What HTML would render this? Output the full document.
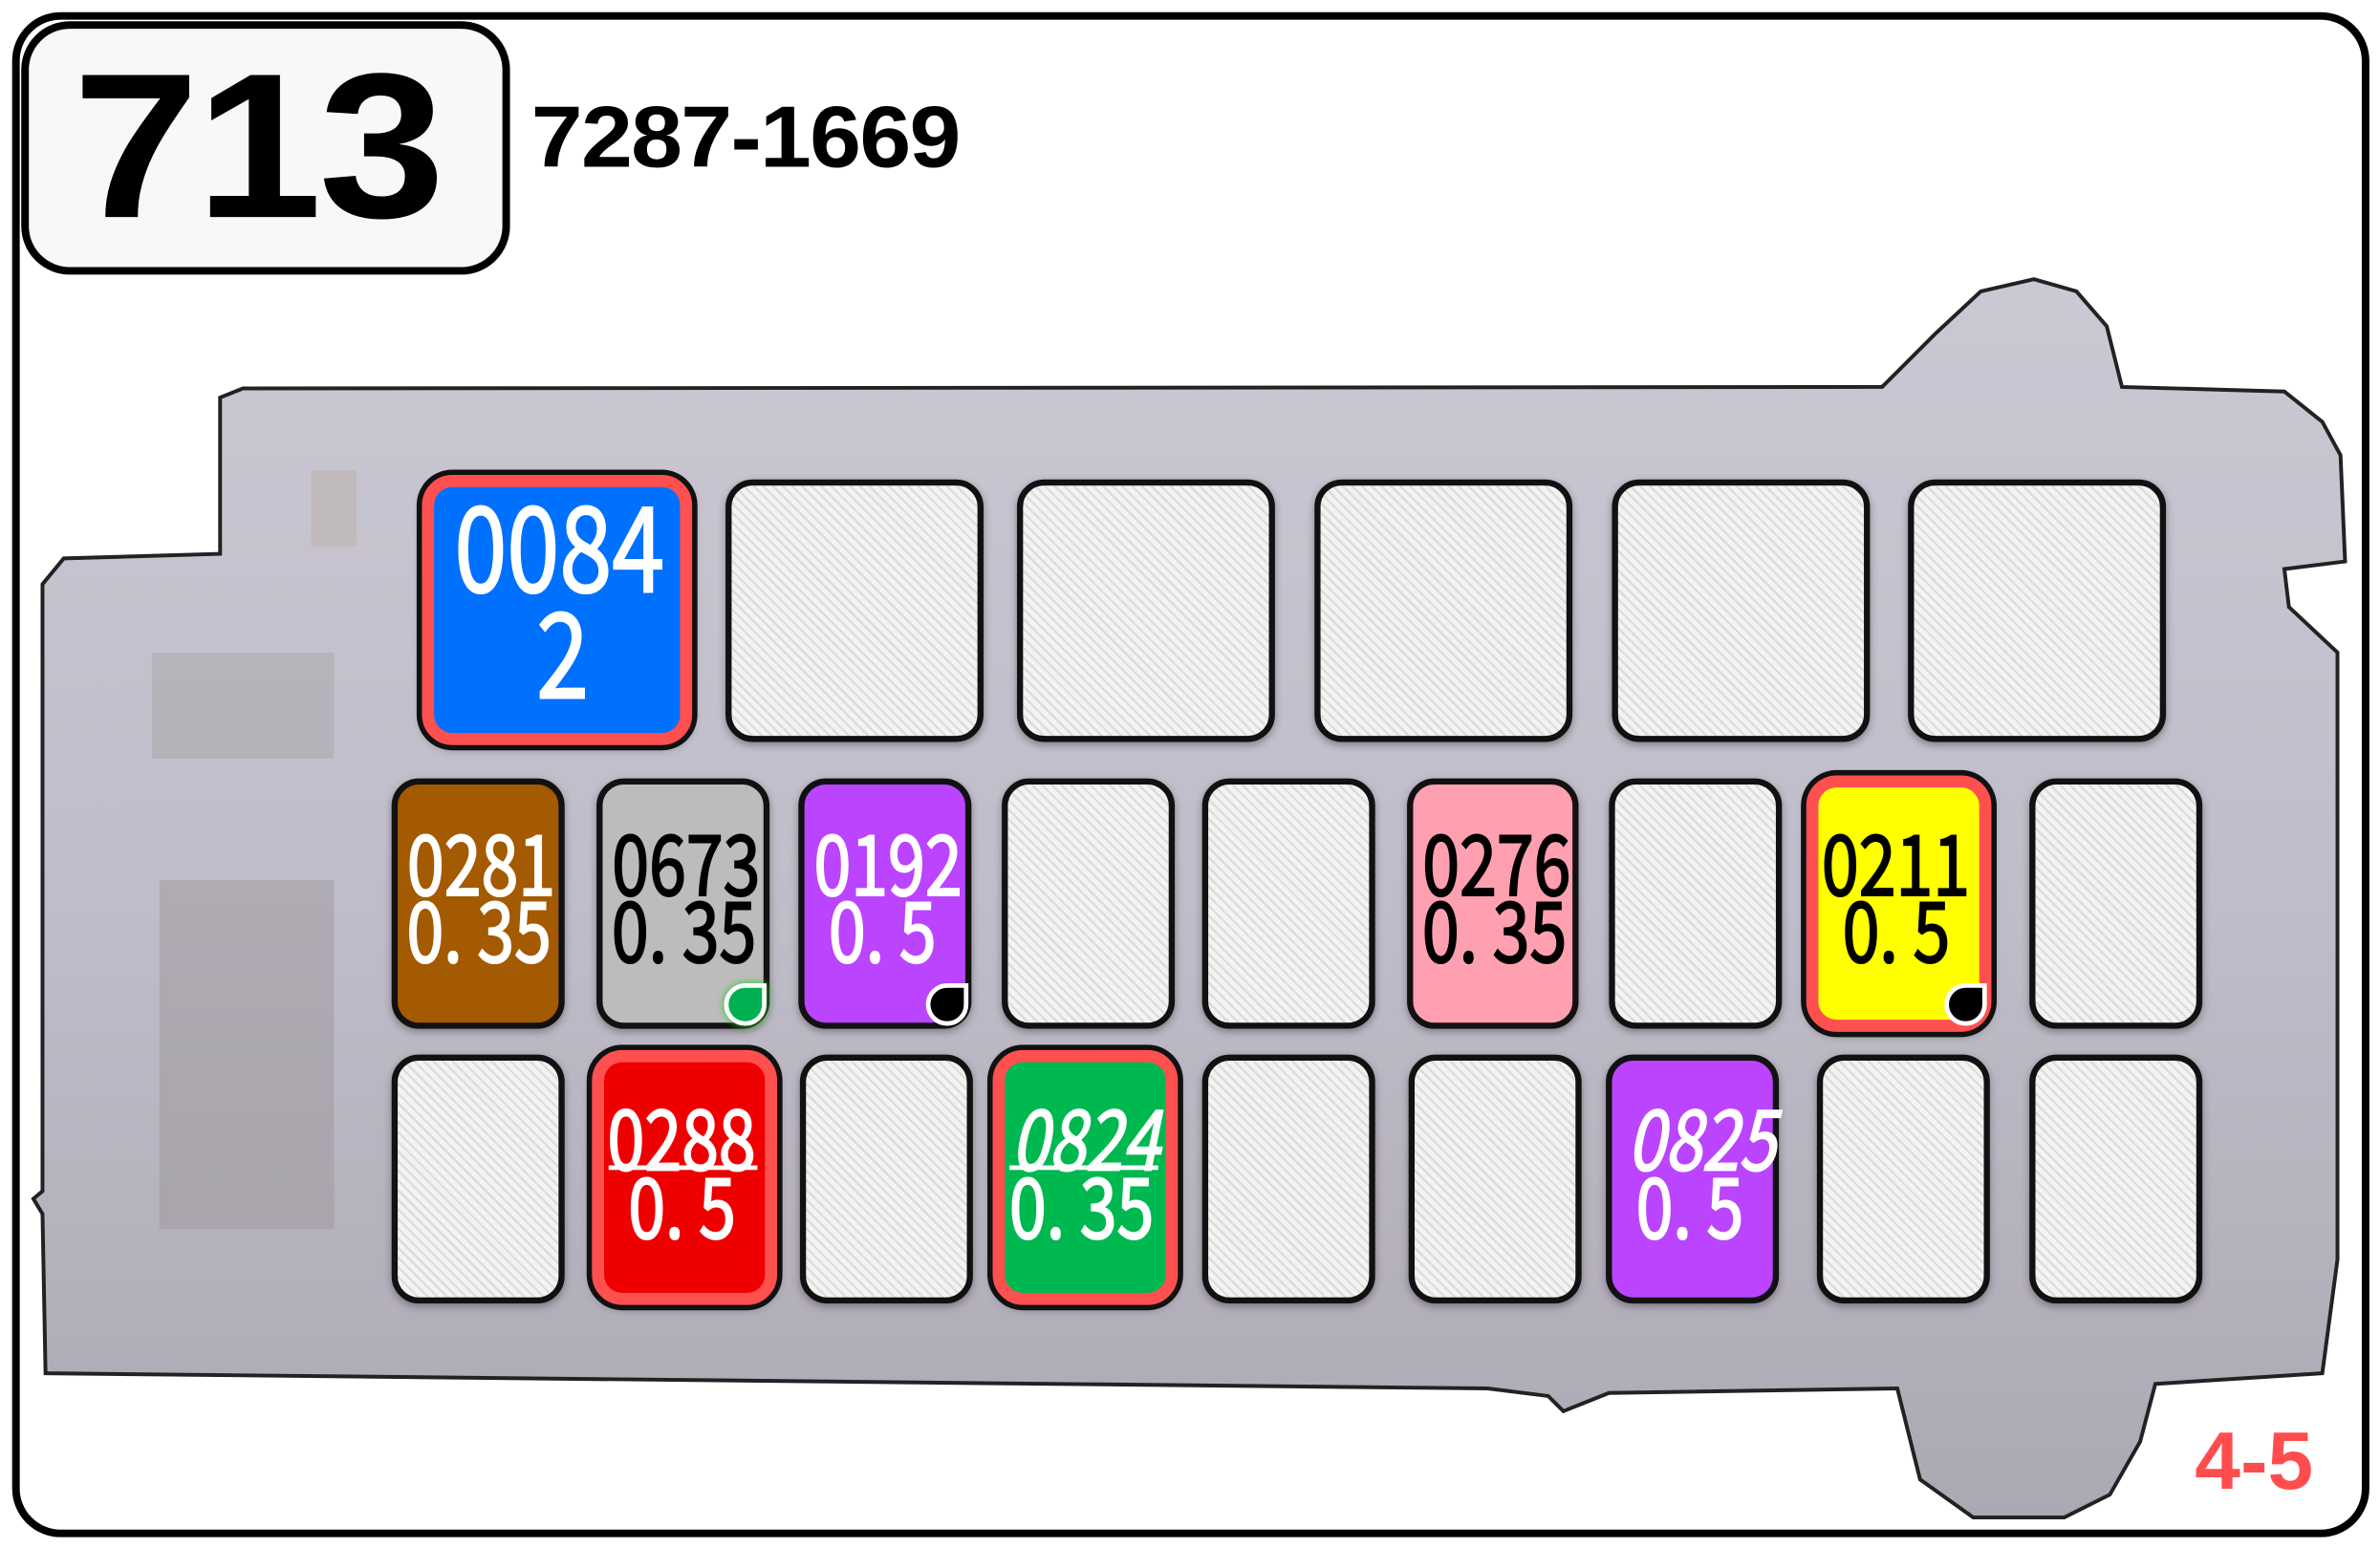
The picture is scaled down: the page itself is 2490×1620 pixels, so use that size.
<!DOCTYPE html>
<html><head><meta charset="utf-8"><style>
html,body{margin:0;padding:0;background:#fff;width:2490px;height:1620px;overflow:hidden}
#w{position:absolute;left:0;top:0;width:1568px;height:1020px;transform:scale(1.588);transform-origin:0 0}
.a{position:absolute;box-sizing:border-box}
.c{position:absolute;box-sizing:border-box;border:4.5px solid #111;border-radius:18px;background:repeating-linear-gradient(45deg,#dcdcdc 0 1.5px,#f3f3f3 1.5px 4.5px);box-shadow:0 2px 5px rgba(60,50,60,.45)}
.r{position:absolute;box-sizing:border-box;border:8px solid #ff5050;border-radius:20px;box-shadow:0 0 0 3.5px #111,0 2px 6px rgba(0,0,0,.4)}
.t{position:absolute;text-align:center;font-family:"Noto Sans CJK JP","Liberation Sans",sans-serif;white-space:nowrap;line-height:1;margin-left:-42px;padding:0 40px;-webkit-text-stroke:1.3px currentColor}
.t span{display:inline-block;transform:scaleX(.8)}
.m{position:absolute;width:28px;height:28px;box-sizing:border-box;border:3px solid #fff;border-radius:50% 0 50% 50%}
</style></head><body><div id="w">
<div class="a" style="left:8px;top:8px;width:1553px;height:1005px;border:5px solid #000;border-radius:32px"></div>
<svg class="a" style="left:0;top:0" width="1568" height="1020">
<defs><linearGradient id="g" x1="0" y1="0" x2="0" y2="1"><stop offset="0" stop-color="#cac8d3"/><stop offset=".5" stop-color="#c0bdca"/><stop offset="1" stop-color="#aca8b3"/></linearGradient></defs>
<path d="M145,262 L160,256 L1240,255 L1275,220 L1305,192 L1340,184 L1368,192 L1388,215 L1398,255 L1505,258 L1530,278 L1542,300 L1545,370 L1505,375 L1508,400 L1540,430 L1540,830 L1530,905 L1420,912 L1410,950 L1390,985 L1360,1000 L1300,1000 L1265,975 L1250,915 L1060,918 L1030,930 L1020,920 L980,915 L30,905 L28,800 L22,790 L28,785 L28,385 L42,368 L145,365 Z" fill="url(#g)" stroke="#222" stroke-width="2.5"/>
<rect x="100" y="430" width="120" height="70" fill="#a7a1a5" opacity=".45"/>
<rect x="105" y="580" width="115" height="230" fill="#9b9496" opacity=".45"/>
<rect x="205" y="310" width="30" height="50" fill="#b8a895" opacity=".35"/>
</svg>
<div class="a" style="left:14px;top:14px;width:322px;height:167px;border:5px solid #000;border-radius:32px;background:#f8f8f8"></div>
<div class="a" style="left:48px;top:18px;font:bold 136px 'Liberation Sans',sans-serif;letter-spacing:-2px;transform:scaleX(1.1);transform-origin:0 0">713</div>
<div class="a" style="left:350px;top:58px;font:bold 57px 'Liberation Sans',sans-serif;letter-spacing:-1px;transform:scaleX(1.07);transform-origin:0 0">7287-1669</div>
<div class="a" style="left:1446px;top:932px;font:bold 54px 'Liberation Sans',sans-serif;color:#ff4d4d">4-5</div>

<div class="r" style="left:278px;top:313px;width:178px;height:178px;background:#0070ff"></div>
<div class="c" style="left:478px;top:316px;width:170px;height:173px"></div>
<div class="c" style="left:670px;top:316px;width:170px;height:173px"></div>
<div class="c" style="left:866px;top:316px;width:170px;height:173px"></div>
<div class="c" style="left:1062px;top:316px;width:170px;height:173px"></div>
<div class="c" style="left:1257px;top:316px;width:170px;height:173px"></div>
<div class="t" style="left:282px;width:178px;top:318px;font-size:78px;color:#fff"><span>0084</span></div>
<div class="t" style="left:284px;width:178px;top:388px;font-size:78px;color:#fff"><span>2</span></div>

<div class="c" style="left:258px;top:513px;width:114px;height:165px;background:#a35a00"></div>
<div class="c" style="left:393px;top:513px;width:114px;height:165px;background:#bcbcbc"></div>
<div class="c" style="left:526px;top:513px;width:114px;height:165px;background:#bb44ff"></div>
<div class="c" style="left:660px;top:513px;width:114px;height:165px"></div>
<div class="c" style="left:792px;top:513px;width:114px;height:165px"></div>
<div class="c" style="left:927px;top:513px;width:113px;height:165px;background:#ffa0b0"></div>
<div class="c" style="left:1060px;top:513px;width:114px;height:165px"></div>
<div class="r" style="left:1190px;top:511px;width:122px;height:169px;background:#ffff00"></div>
<div class="c" style="left:1337px;top:513px;width:114px;height:165px"></div>

<div class="t" style="left:258px;width:114px;top:539px;font-size:55px;color:#fff"><span>0281</span></div>
<div class="t" style="left:258px;width:114px;top:583px;font-size:55px;color:#fff"><span>0. 35</span></div>
<div class="t" style="left:393px;width:114px;top:539px;font-size:55px;color:#000"><span>0673</span></div>
<div class="t" style="left:393px;width:114px;top:583px;font-size:55px;color:#000"><span>0. 35</span></div>
<div class="t" style="left:526px;width:114px;top:539px;font-size:55px;color:#fff"><span>0192</span></div>
<div class="t" style="left:526px;width:114px;top:583px;font-size:55px;color:#fff"><span>0. 5</span></div>
<div class="t" style="left:927px;width:113px;top:539px;font-size:55px;color:#000"><span>0276</span></div>
<div class="t" style="left:927px;width:113px;top:583px;font-size:55px;color:#000"><span>0. 35</span></div>
<div class="t" style="left:1190px;width:122px;top:539px;font-size:55px;color:#000"><span>0211</span></div>
<div class="t" style="left:1190px;width:122px;top:583px;font-size:55px;color:#000"><span>0. 5</span></div>
<div class="m" style="left:477px;top:648px;background:#00b050;box-shadow:0 0 5px #2c2"></div>
<div class="m" style="left:610px;top:648px;background:#000"></div>
<div class="m" style="left:1281px;top:648px;background:#000"></div>

<div class="c" style="left:258px;top:695px;width:114px;height:164px"></div>
<div class="r" style="left:390px;top:692px;width:122px;height:168px;background:#ee0000"></div>
<div class="c" style="left:527px;top:695px;width:114px;height:164px"></div>
<div class="r" style="left:654px;top:692px;width:122px;height:168px;background:#00b850"></div>
<div class="c" style="left:792px;top:695px;width:114px;height:164px"></div>
<div class="c" style="left:928px;top:695px;width:114px;height:164px"></div>
<div class="c" style="left:1058px;top:695px;width:114px;height:164px;background:#bb44ff"></div>
<div class="c" style="left:1197px;top:695px;width:114px;height:164px"></div>
<div class="c" style="left:1337px;top:695px;width:114px;height:164px"></div>

<div class="t" style="left:390px;width:122px;top:720px;font-size:55px;color:#fff"><span>0288</span></div>
<div class="a" style="left:401px;top:768px;width:98px;height:3px;background:#fff"></div>
<div class="t" style="left:390px;width:122px;top:765px;font-size:55px;color:#fff"><span>0. 5</span></div>
<div class="t" style="left:656px;width:122px;top:720px;font-size:55px;color:#fff;font-style:italic"><span>0824</span></div>
<div class="a" style="left:665px;top:768px;width:98px;height:3px;background:#fff"></div>
<div class="t" style="left:654px;width:122px;top:765px;font-size:55px;color:#fff"><span>0. 35</span></div>
<div class="t" style="left:1062px;width:116px;top:720px;font-size:55px;color:#fff;font-style:italic"><span>0825</span></div>
<div class="t" style="left:1058px;width:114px;top:765px;font-size:55px;color:#fff"><span>0. 5</span></div>
</div></body></html>
